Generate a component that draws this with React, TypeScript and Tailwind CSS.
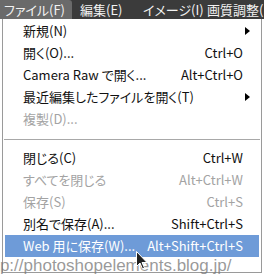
import React from "react";

type Item = {
  label: string;
  shortcut?: string;
  disabled?: boolean;
  submenu?: boolean;
  active?: boolean;
};

const topItems: Item[] = [
  { label: "新規(N)", submenu: true },
  { label: "開く(O)...", shortcut: "Ctrl+O" },
  { label: "Camera Raw で開く...", shortcut: "Alt+Ctrl+O" },
  { label: "最近編集したファイルを開く(T)", submenu: true },
  { label: "複製(D)...", disabled: true },
];

const bottomItems: Item[] = [
  { label: "閉じる(C)", shortcut: "Ctrl+W" },
  { label: "すべてを閉じる", shortcut: "Alt+Ctrl+W", disabled: true },
  { label: "保存(S)", shortcut: "Ctrl+S", disabled: true },
  { label: "別名で保存(A)...", shortcut: "Shift+Ctrl+S" },
  { label: "Web 用に保存(W)...", shortcut: "Alt+Shift+Ctrl+S", active: true },
];

function MenuRow({ item }: { item: Item }) {
  const color = item.active
    ? "bg-[#6e9bd8] text-white"
    : item.disabled
      ? "text-[#a3a3a3]"
      : "text-[#111]";
  return (
    <div className={`mx-[2px] flex h-[22px] items-center pl-[18px] pr-[16px] text-[13px] ${color}`}>
      <span className="flex-1 whitespace-nowrap">{item.label}</span>
      {item.shortcut && <span className="whitespace-nowrap">{item.shortcut}</span>}
      {item.submenu && (
        <svg width="5" height="8" viewBox="0 0 5 8" className="mr-[-7px]">
          <path d="M0 0 L5 4 L0 8 Z" fill="#000" />
        </svg>
      )}
    </div>
  );
}

export default function App() {
  return (
    <div
      className="relative h-[279px] w-[264px] overflow-hidden bg-white [font-feature-settings:'palt']"
      style={{ fontFamily: '"Noto Sans CJK JP", "Open Sans", sans-serif' }}
    >
      {/* menu bar */}
      <div className="flex h-[19px] items-center overflow-hidden whitespace-nowrap bg-[#3b3b3b] text-[13px] text-[#f2f2f2]">
        <div className="flex h-full w-[72px] shrink-0 items-center rounded-tr-[3px] bg-[#6a6a6a] pl-[4px]">ファイル(F)</div>
        <div className="ml-[8px] w-[63px] shrink-0">編集(E)</div>
        <div className="w-[64px] shrink-0">イメージ(I)</div>
        <div className="shrink-0">画質調整(</div>
      </div>

      {/* dropdown */}
      <div className="ml-[2px] h-[254px] w-[260px] border-x border-b border-[#9a9a9a] bg-white pt-px">
        {topItems.map((it) => (
          <MenuRow key={it.label} item={it} />
        ))}
        <div className="mx-[1px] mb-[7px] mt-[9px] h-px bg-[#a8a8a8]" />
        {bottomItems.map((it) => (
          <MenuRow key={it.label} item={it} />
        ))}
      </div>

      {/* watermark */}
      <div
        className="pointer-events-none absolute left-[-19px] top-[253px] whitespace-nowrap text-[17px] text-[#777]/75"
        style={{ fontFamily: '"Liberation Sans", sans-serif' }}
      >
        http://photoshopelements.blog.jp/
      </div>

      {/* cursor */}
      <svg className="absolute left-[136px] top-[251px]" width="12" height="19" viewBox="0 0 12 19">
        <path d="M0.5 0.5 L0.5 15.5 L4 12 L6.5 18 L8.5 17 L6 11.5 L11 11.5 Z" fill="#222" stroke="#fff" strokeWidth="1" />
      </svg>
    </div>
  );
}
